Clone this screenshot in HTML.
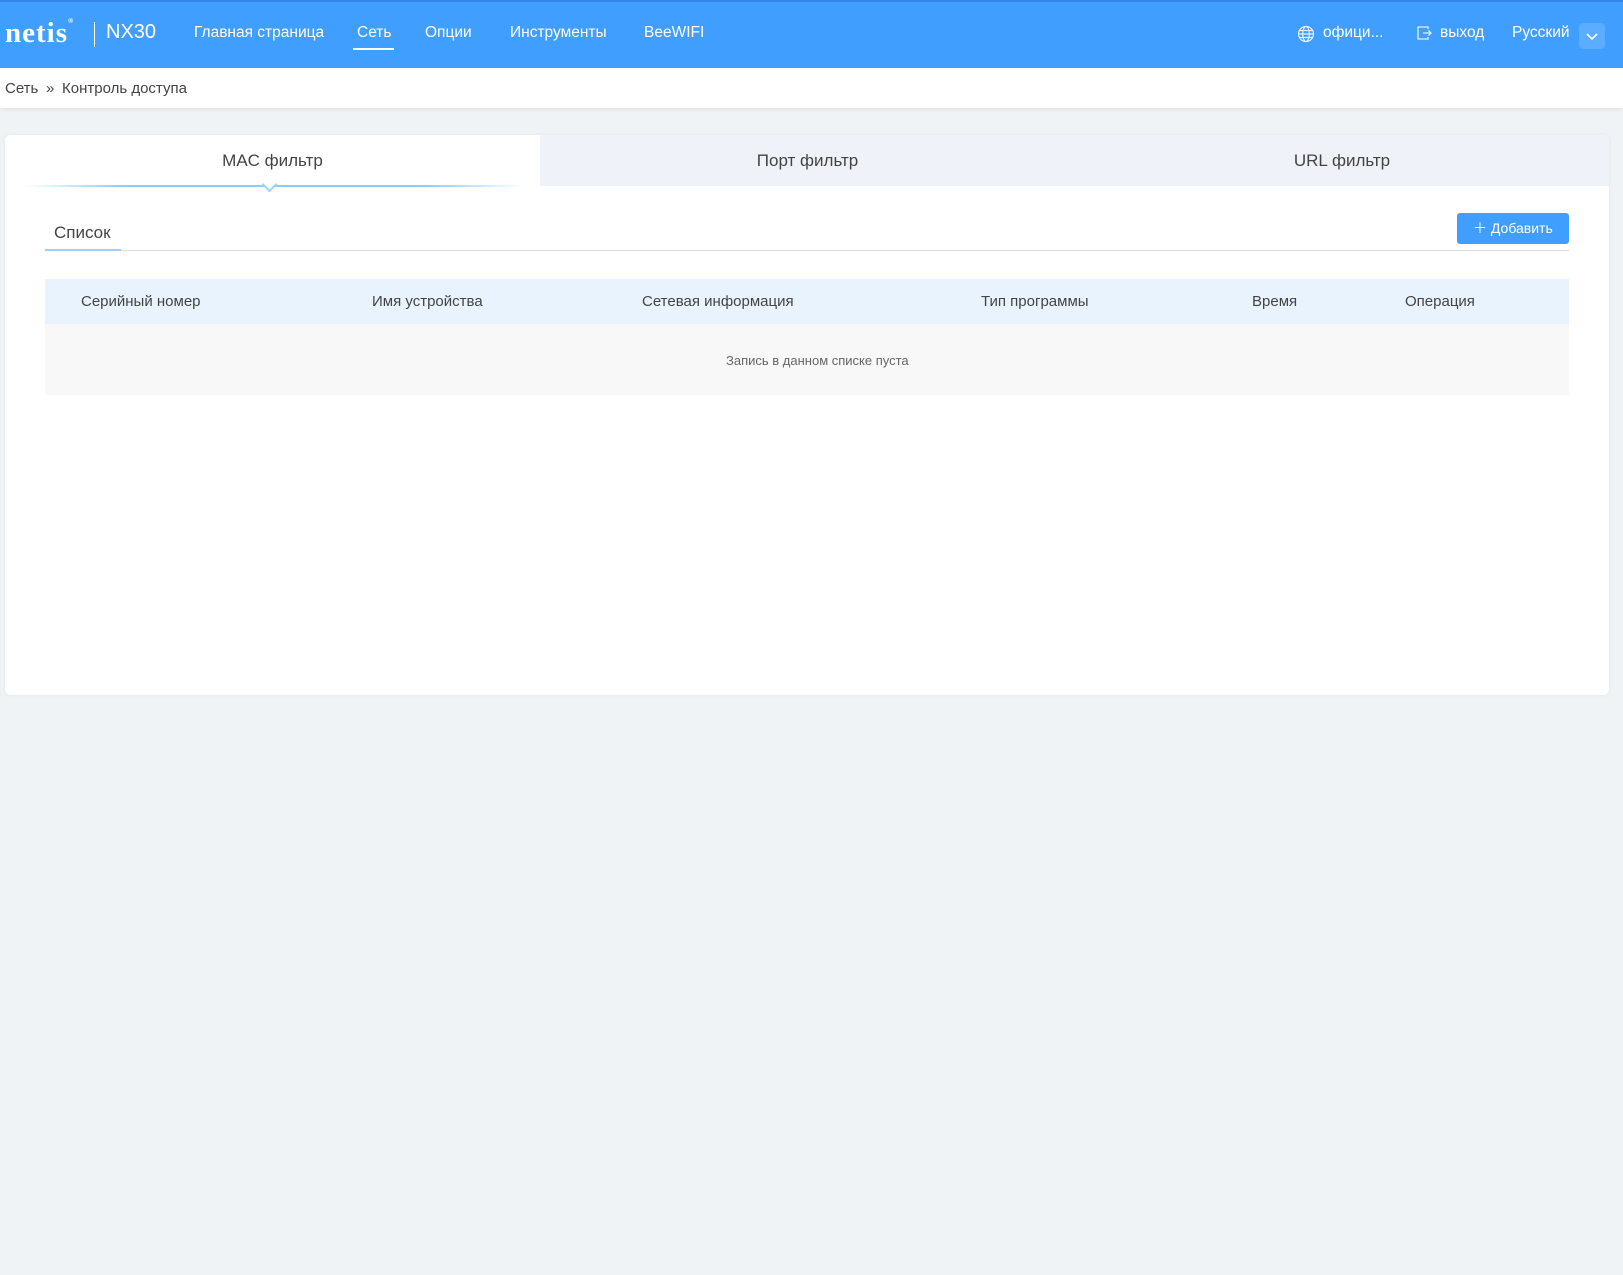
<!DOCTYPE html>
<html><head><meta charset="utf-8"><style>
*{margin:0;padding:0;box-sizing:border-box}
body{width:1623px;height:1275px;background:#eff3f6;font-family:"Liberation Sans","Noto Sans CJK SC",sans-serif;color:#333;position:relative;overflow:hidden}
.hdr{position:absolute;left:0;top:0;width:1623px;height:68px;background:#409efe;border-top:2px solid #2f86e6;color:#fff}
.hdr span{position:absolute;top:22px;font-size:15.5px;white-space:nowrap}
.logo{position:absolute;left:5px;top:15px;font-family:"Liberation Serif",serif;font-weight:bold;font-size:29px;letter-spacing:1px;color:#fff}
.sep{position:absolute;left:94px;top:20px;width:1px;height:25px;background:#fff}
.crumb{position:absolute;left:0;top:68px;width:1623px;height:40px;background:#fff;box-shadow:0 2px 4px rgba(0,0,0,.06)}
.crumb span{position:absolute;top:12px;font-size:15px;color:#444}
.card{position:absolute;left:5px;top:135px;width:1604px;height:560px;background:#fff;border-radius:6px;box-shadow:0 0 4px rgba(0,0,0,.05);overflow:hidden}
.tab{position:absolute;top:0;height:51px;font-size:17px;color:#444;text-align:center;line-height:51px}
.t{position:absolute;font-size:15px;color:#444;white-space:nowrap}
</style></head><body>
<div class="hdr">
<div class="logo">netis<sup style="font-size:7px;vertical-align:top">®</sup></div>
<div class="sep"></div>
<span style="left:106px;top:19px;font-size:20px">NX30</span>
<span style="left:194px">Главная страница</span>
<span style="left:357px">Сеть</span>
<div style="position:absolute;left:353px;top:46px;width:41px;height:2px;background:#fff"></div>
<span style="left:425px">Опции</span>
<span style="left:510px">Инструменты</span>
<span style="left:644px">BeeWIFI</span>
<svg style="position:absolute;left:1297px;top:23px" width="18" height="18" viewBox="0 0 18 18" fill="none" stroke="#e6f0ff" stroke-width="1.2"><circle cx="9" cy="9" r="7.5"/><ellipse cx="9" cy="9" rx="3.3" ry="7.5"/><path d="M1.5 9h15M2.5 5.5h13M2.5 12.5h13"/></svg>
<span style="left:1323px">офици...</span>
<svg style="position:absolute;left:1416px;top:23px" width="16" height="16" viewBox="0 0 16 16" fill="none" stroke="#e6f0ff" stroke-width="1.3"><path d="M12 4V2H2v12h10v-2M7 8h8M12.5 5.5 15 8l-2.5 2.5"/></svg>
<span style="left:1440px">выход</span>
<span style="left:1512px">Русский</span>
<div style="position:absolute;left:1579px;top:21px;width:26px;height:26px;background:#5aadff;border-radius:4px"><svg width="26" height="26" viewBox="0 0 26 26"><path d="M8 11l5 5 5-5" fill="none" stroke="#fff" stroke-width="1.6"/></svg></div>
</div>
<div class="crumb"><span style="left:5px">Сеть</span><span style="left:46px">»</span><span style="left:62px">Контроль доступа</span></div>
<div class="card">
<div class="tab" style="left:0;width:535px;background:#fff">MAC фильтр</div>
<div class="tab" style="left:535px;width:535px;background:#f0f2fa">Порт фильтр</div>
<div class="tab" style="left:1070px;width:534px;background:#f0f2fa">URL фильтр</div>
<div style="position:absolute;left:20px;top:50px;width:500px;height:2px;background:linear-gradient(90deg,rgba(135,206,250,0),#87cefa 20%,#87cefa 80%,rgba(135,206,250,0))"></div>
<div style="position:absolute;left:259px;top:44px;width:11px;height:11px;background:#fff;transform:rotate(45deg);border-right:2px solid #9ad6f7;border-bottom:2px solid #9ad6f7"></div>
<div class="t" style="left:49px;top:88px;font-size:17px">Список</div>
<div style="position:absolute;left:40px;top:115px;width:1524px;height:1px;background:#ddd"></div>
<div style="position:absolute;left:40px;top:114px;width:76px;height:2px;background:#9ccffa"></div>
<div style="position:absolute;left:1452px;top:78px;width:112px;height:31px;background:#409efe;border-radius:3px;color:#fff;font-size:14px;line-height:31px;padding-left:16px">＋ Добавить</div>
<div style="position:absolute;left:40px;top:144px;width:1524px;height:45px;background:#e9f3fe"></div>
<div style="position:absolute;left:40px;top:189px;width:1524px;height:71px;background:#f8f8f8"></div>
<div class="t" style="left:76px;top:158px">Серийный номер</div>
<div class="t" style="left:367px;top:158px">Имя устройства</div>
<div class="t" style="left:637px;top:158px">Сетевая информация</div>
<div class="t" style="left:976px;top:158px">Тип программы</div>
<div class="t" style="left:1247px;top:158px">Время</div>
<div class="t" style="left:1400px;top:158px">Операция</div>
<div class="t" style="left:721px;top:218px;font-size:13px;color:#666">Запись в данном списке пуста</div>
</div>
</body></html>
